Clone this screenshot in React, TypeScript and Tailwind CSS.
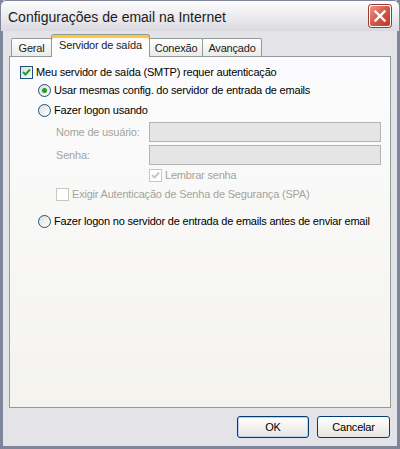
import React from "react"

const font = { fontFamily: "'Liberation Sans', Arial, sans-serif" }

function CheckBox({ checked, disabled }: { checked?: boolean; disabled?: boolean }) {
  return (
    <span
      className={
        "flex h-[13px] w-[13px] shrink-0 items-center justify-center border " +
        (disabled ? "border-[#cac8bb] bg-white" : "border-[#1c5180] bg-gradient-to-br from-[#dcdcd7] to-white")
      }
    >
      {checked && (
        <svg width="9" height="9" viewBox="0 0 9 9">
          <path d="M1 4 L3.5 6.5 L8 1.5" fill="none" stroke={disabled ? "#cac8bb" : "#21a121"} strokeWidth="2" />
        </svg>
      )}
    </span>
  )
}

function Radio({ checked }: { checked?: boolean }) {
  return (
    <span className="flex h-[13px] w-[13px] shrink-0 items-center justify-center rounded-full border border-[#1c5180] bg-gradient-to-br from-[#dcdcd7] to-white">
      {checked && <span className="h-[5px] w-[5px] rounded-full bg-[#21a121]" />}
    </span>
  )
}

export default function App() {
  return (
    <div
      style={font}
      className="flex h-[449px] w-[400px] flex-col border-[3px] border-t-0 border-[#7f869c] bg-[#e4e3e8] text-[11px] leading-[13px] tracking-[-0.2px] text-black"
    >
      {/* Title bar */}
      <div className="-mx-[3px] flex h-[31px] shrink-0 items-center justify-between rounded-t-[6px] border-x border-t border-[#7f869c] bg-gradient-to-b from-[#fdfdfd] via-[#ececf0] to-[#d9d9df] pl-[7px] pr-[8px]">
        <span className="pt-[1px] text-[14px] leading-[18px] tracking-normal text-[#1b1b1b]">Configurações de email na Internet</span>
        <span className="flex h-[22px] w-[22px] items-center justify-center rounded-[3px] border border-white bg-gradient-to-br from-[#e9968a] via-[#d4564a] to-[#bb3a2c] shadow-[0_0_0_1px_#9a3a30]">
          <svg width="12" height="12" viewBox="0 0 12 12">
            <path d="M1.5 1.5 L10.5 10.5 M10.5 1.5 L1.5 10.5" stroke="white" strokeWidth="2.4" strokeLinecap="square" />
          </svg>
        </span>
      </div>

      <div className="flex flex-1 flex-col px-[6px] pt-[3px]">
        {/* Tabs */}
        <div className="flex h-[22px] items-end pl-[2px] text-[#1b1b1b]">
          <div className="flex h-[18px] w-[41px] items-center justify-center rounded-t-[2px] border border-b-0 border-[#919b9c] bg-gradient-to-b from-white to-[#ecebe6] pt-[2px]">
            Geral
          </div>
          <div className="relative z-10 -mb-px -ml-px flex h-[23px] w-[99px] items-center justify-center rounded-t-[3px] border border-b-0 border-[#919b9c] bg-[#fcfcfe] pb-[2px] shadow-[inset_0_3px_0_#ffc83c]">
            Servidor de saída
          </div>
          <div className="-ml-px flex h-[18px] w-[54px] items-center justify-center rounded-t-[2px] border border-b-0 border-[#919b9c] bg-gradient-to-b from-white to-[#ecebe6] pt-[2px]">
            Conexão
          </div>
          <div className="-ml-px flex h-[18px] w-[60px] items-center justify-center rounded-t-[2px] border border-b-0 border-[#919b9c] bg-gradient-to-b from-white to-[#ecebe6] pt-[2px]">
            Avançado
          </div>
        </div>

        {/* Panel */}
        <div className="flex h-[352px] flex-col border border-[#919b9c] bg-gradient-to-b from-[#fcfcfe] to-[#f4f3ee] pl-[10px] pr-[9px] pt-[7px]">
          <label className="flex h-[16px] items-center gap-[3px]">
            <CheckBox checked />
            <span>Meu servidor de saída (SMTP) requer autenticação</span>
          </label>

          <div className="ml-[18px] flex flex-col">
            <label className="mt-[2px] flex h-[16px] items-center gap-[3px]">
              <Radio checked />
              <span>Usar mesmas config. do servidor de entrada de emails</span>
            </label>
            <label className="mt-[4px] flex h-[16px] items-center gap-[3px]">
              <Radio />
              <span>Fazer logon usando</span>
            </label>

            <div className="ml-[18px] flex flex-col text-[#a6a39a]">
              <div className="mt-[4px] flex h-[20px] items-center">
                <span className="w-[93px] whitespace-nowrap">Nome de usuário:</span>
                <div className="h-[20px] flex-1 border border-[#b3b3b3] bg-[#e5e5e5]" />
              </div>
              <div className="mt-[3px] flex h-[20px] items-center">
                <span className="w-[93px] whitespace-nowrap">Senha:</span>
                <div className="h-[20px] flex-1 border border-[#b3b3b3] bg-[#e5e5e5]" />
              </div>
              <label className="ml-[93px] mt-[2px] flex h-[16px] items-center gap-[3px]">
                <CheckBox checked disabled />
                <span>Lembrar senha</span>
              </label>
              <label className="mt-[3px] flex h-[16px] items-center gap-[3px]">
                <CheckBox disabled />
                <span>Exigir Autenticação de Senha de Segurança (SPA)</span>
              </label>
            </div>

            <label className="mt-[11px] flex h-[16px] items-center gap-[3px] whitespace-nowrap">
              <Radio />
              <span>Fazer logon no servidor de entrada de emails antes de enviar email</span>
            </label>
          </div>
        </div>

        {/* Buttons */}
        <div className="mt-[8px] flex justify-end gap-[8px] pr-px">
          <button className="h-[22px] w-[72px] rounded-[3px] border border-[#003c74] bg-gradient-to-b from-white to-[#e6e5e0] text-[11px] text-black shadow-[inset_0_0_0_1px_#bcd0f0]">
            OK
          </button>
          <button className="h-[22px] w-[73px] rounded-[3px] border border-[#003c74] bg-gradient-to-b from-white to-[#e6e5e0] text-[11px] text-black">
            Cancelar
          </button>
        </div>
      </div>
    </div>
  )
}
